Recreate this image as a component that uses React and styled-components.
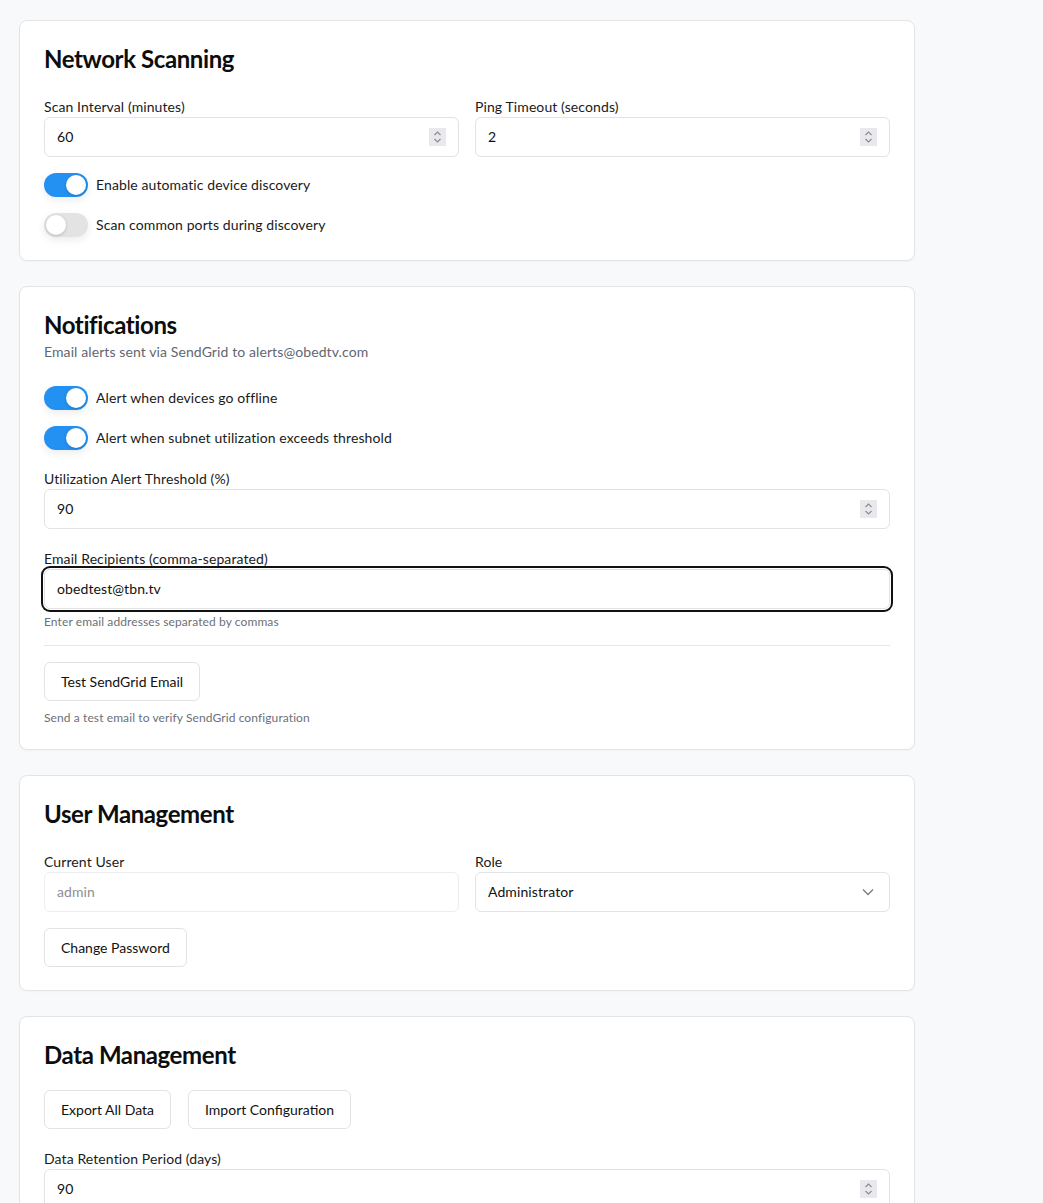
import React from "react";
import styled, { createGlobalStyle } from "styled-components";

const Global = createGlobalStyle`
  * { box-sizing: border-box; }
  html, body { margin: 0; padding: 0; background: #f8f9fa; }
  body {
    font-family: Lato, "Liberation Sans", Arial, sans-serif;
    color: #111111;
    font-size: 14px;
    letter-spacing: 0.1px;
  }
`;

const Page = styled.div`
  padding: 20px 0 40px 19px;
  display: flex;
  flex-direction: column;
  gap: 25px;
`;

const Card = styled.section`
  width: 896px;
  background: #ffffff;
  border: 1px solid #e3e4e6;
  border-radius: 8px;
  padding: 24px 24px 23px;
  display: flex;
  flex-direction: column;
  box-shadow: 0 1px 2px rgba(0, 0, 0, 0.03);
`;

const Title = styled.h2`
  margin: 0;
  font-size: 24px;
  line-height: 28px;
  font-weight: 700;
  color: #0d0d0d;
  letter-spacing: -0.4px;
`;

const Subtitle = styled.p`
  margin: 3px 0 0;
  font-size: 14px;
  line-height: 20px;
  color: #5f6673;
`;

const Block = styled.div`
  margin-top: ${(p) => p.$mt || 0}px;
  display: flex;
  flex-direction: column;
`;

const TwoCol = styled.div`
  margin-top: ${(p) => p.$mt || 0}px;
  display: grid;
  grid-template-columns: 1fr 1fr;
  gap: 16px;
`;

const Label = styled.label`
  display: block;
  font-size: 14px;
  line-height: 20px;
  color: #1a1a1a;
`;

const Field = styled.div`
  height: 40px;
  display: flex;
  align-items: center;
  justify-content: space-between;
  border: 1px solid ${(p) => (p.$disabled ? "#ededee" : "#e2e3e5")};
  border-radius: 6px;
  background: #ffffff;
  padding: 0 ${(p) => (p.$select ? 15 : 12)}px 0 12px;
  font-size: 14px;
  color: ${(p) => (p.$disabled ? "#8e8e93" : "#111111")};
  box-shadow: ${(p) =>
    p.$focused ? "0 0 0 1px #ffffff, 0 0 0 3px #111111" : "none"};
`;

const Value = styled.span`
  line-height: 20px;
`;

const SpinBox = styled.span`
  width: 17px;
  height: 18px;
  background: #e9e9ed;
  display: flex;
  align-items: center;
  justify-content: center;
`;

const Hint = styled.p`
  margin: ${(p) => p.$mt || 0}px 0 0;
  font-size: 12px;
  line-height: 16px;
  color: #6b7078;
`;

const ToggleList = styled.div`
  margin-top: ${(p) => p.$mt || 0}px;
  display: flex;
  flex-direction: column;
  gap: 16px;
`;

const ToggleRow = styled.div`
  display: flex;
  align-items: center;
  gap: 8px;
  height: 24px;
`;

const Track = styled.span`
  width: 44px;
  height: 24px;
  border-radius: 12px;
  background: ${(p) => (p.$on ? "#2291f2" : "#e3e3e3")};
  display: flex;
  align-items: center;
  justify-content: ${(p) => (p.$on ? "flex-end" : "flex-start")};
  padding: 2px;
  box-shadow: 0 3px 8px rgba(0, 0, 0, 0.08);
  flex-shrink: 0;
`;

const Knob = styled.span`
  width: 20px;
  height: 20px;
  border-radius: 50%;
  background: #ffffff;
  box-shadow: 0 1px 3px rgba(0, 0, 0, 0.2);
`;

const ToggleText = styled.span`
  font-size: 14px;
  line-height: 20px;
  color: #1a1a1a;
`;

const Divider = styled.hr`
  margin: 15px 0 16px;
  border: none;
  border-top: 1px solid #e6e7e9;
  height: 0;
`;

const ButtonRow = styled.div`
  margin-top: ${(p) => p.$mt || 0}px;
  display: flex;
  gap: 17px;
`;

const Button = styled.button`
  height: 39px;
  padding: 0 16px;
  background: #ffffff;
  border: 1px solid #e2e3e5;
  border-radius: 6px;
  font-family: inherit;
  font-size: 14px;
  letter-spacing: 0;
  color: #111111;
  cursor: pointer;
`;

const Spinner = () => (
  <SpinBox>
    <svg width="9" height="14" viewBox="0 0 9 14" fill="none">
      <path d="M1.5 5 L4.5 2 L7.5 5" stroke="#8c8c92" strokeWidth="1.2" />
      <path d="M1.5 9 L4.5 12 L7.5 9" stroke="#8c8c92" strokeWidth="1.2" />
    </svg>
  </SpinBox>
);

const Chevron = () => (
  <svg width="12" height="8" viewBox="0 0 12 8" fill="none">
    <path d="M1 1.5 L6 6.5 L11 1.5" stroke="#7a7a7f" strokeWidth="1.3" />
  </svg>
);

const NumberField = ({ label, value, mt }) => (
  <Block $mt={mt}>
    <Label>{label}</Label>
    <Field>
      <Value>{value}</Value>
      <Spinner />
    </Field>
  </Block>
);

const Toggle = ({ on, children }) => (
  <ToggleRow>
    <Track $on={on}>
      <Knob />
    </Track>
    <ToggleText>{children}</ToggleText>
  </ToggleRow>
);

export default function App() {
  return (
    <>
      <Global />
      <Page>
        <Card>
          <Title>Network Scanning</Title>
          <TwoCol $mt={24}>
            <NumberField label="Scan Interval (minutes)" value="60" />
            <NumberField label="Ping Timeout (seconds)" value="2" />
          </TwoCol>
          <ToggleList $mt={16}>
            <Toggle on>Enable automatic device discovery</Toggle>
            <Toggle>Scan common ports during discovery</Toggle>
          </ToggleList>
        </Card>

        <Card>
          <Title>Notifications</Title>
          <Subtitle>Email alerts sent via SendGrid to alerts@obedtv.com</Subtitle>
          <ToggleList $mt={24}>
            <Toggle on>Alert when devices go offline</Toggle>
            <Toggle on>Alert when subnet utilization exceeds threshold</Toggle>
          </ToggleList>
          <NumberField label="Utilization Alert Threshold (%)" value="90" mt={19} />
          <Block $mt={20}>
            <Label>Email Recipients (comma-separated)</Label>
            <Field $focused>
              <Value>obedtest@tbn.tv</Value>
            </Field>
            <Hint $mt={5}>Enter email addresses separated by commas</Hint>
          </Block>
          <Divider />
          <Block>
            <ButtonRow>
              <Button>Test SendGrid Email</Button>
            </ButtonRow>
            <Hint $mt={9}>Send a test email to verify SendGrid configuration</Hint>
          </Block>
        </Card>

        <Card>
          <Title>User Management</Title>
          <TwoCol $mt={24}>
            <Block>
              <Label>Current User</Label>
              <Field $disabled>
                <Value>admin</Value>
              </Field>
            </Block>
            <Block>
              <Label>Role</Label>
              <Field $select>
                <Value>Administrator</Value>
                <Chevron />
              </Field>
            </Block>
          </TwoCol>
          <ButtonRow $mt={16}>
            <Button>Change Password</Button>
          </ButtonRow>
        </Card>

        <Card>
          <Title>Data Management</Title>
          <ButtonRow $mt={21}>
            <Button>Export All Data</Button>
            <Button>Import Configuration</Button>
          </ButtonRow>
          <NumberField label="Data Retention Period (days)" value="90" mt={20} />
        </Card>
      </Page>
    </>
  );
}
